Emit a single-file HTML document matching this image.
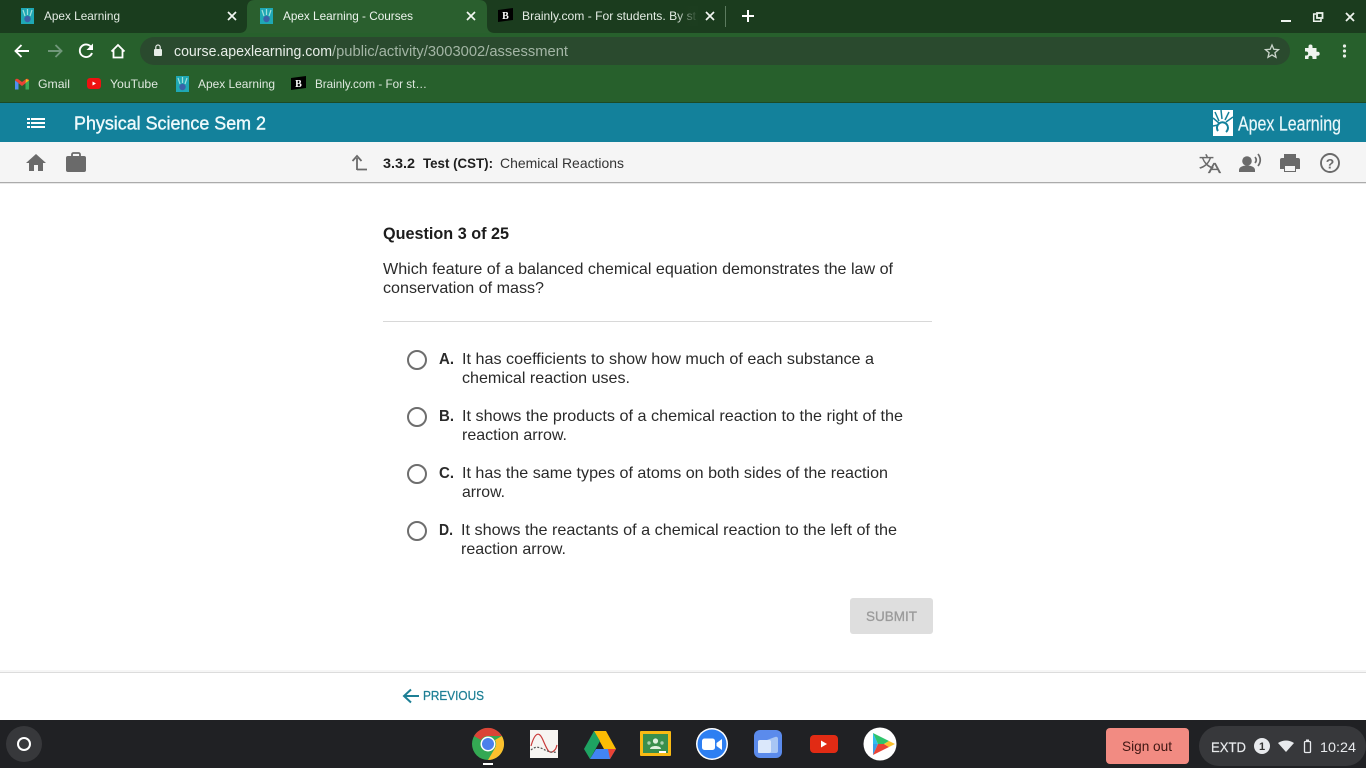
<!DOCTYPE html>
<html lang="en"><head><meta charset="utf-8"><title>Apex Learning - Courses</title>
<style>
html,body{margin:0;padding:0;width:1366px;height:768px;overflow:hidden;background:#fff}
svg{display:block}
text{font-family:"Liberation Sans",sans-serif}
</style></head><body>
<svg xmlns="http://www.w3.org/2000/svg" width="1366" height="768" viewBox="0 0 1366 768">
<defs>
<linearGradient id="fade" x1="0" x2="1"><stop offset="0" stop-color="#1c3d1f" stop-opacity="0"/><stop offset="1" stop-color="#1c3d1f"/></linearGradient>
<g id="apx"><rect width="13" height="16" fill="#1fa8b4"/><path d="M2 2l2 6M6.500 1v6M11 2L9 8" stroke="#9fe0dc" stroke-width="1.200" fill="none"/><circle cx="6.500" cy="11" r="3.200" fill="#3c62a8"/></g>
<g id="brn"><path d="M0 2L15 0V12L0 14Z" fill="#000"/><text x="7.500" y="11" font-size="10" font-weight="700" fill="#fff" text-anchor="middle" style="font-family:'Liberation Serif',serif">B</text></g>
</defs>

<!-- browser chrome -->
<rect width="1366" height="33" fill="#1b3c1e"/>
<rect y="0" width="247" height="33" fill="#1a3d1e"/>
<rect y="33" width="1366" height="70" fill="#27602c"/>
<rect y="102" width="1366" height="1" fill="#1d4a24"/>
<path d="M239 33q8 0 8-8V8q0-8 8-8h224q8 0 8 8v17q0 8 8 8Z" fill="#2a5f2e"/>

<use href="#apx" x="21" y="8"/>
<text x="44" y="20" font-size="12" fill="#e4ece4" textLength="76" lengthAdjust="spacingAndGlyphs">Apex Learning</text>
<path d="M228 12l8 8M236 12l-8 8" stroke="#f2f6f2" stroke-width="1.700"/>

<use href="#apx" x="260" y="8"/>
<text x="283" y="20" font-size="12" fill="#eef4ee" textLength="130" lengthAdjust="spacingAndGlyphs">Apex Learning - Courses</text>
<path d="M467 12l8 8M475 12l-8 8" stroke="#f2f6f2" stroke-width="1.700"/>

<use href="#brn" x="498" y="8"/>
<text x="522" y="20" font-size="12" fill="#e4ece4" textLength="174" lengthAdjust="spacingAndGlyphs">Brainly.com - For students. By st</text>
<rect x="676" y="6" width="22" height="20" fill="url(#fade)"/>
<path d="M706 12l8 8M714 12l-8 8" stroke="#f2f6f2" stroke-width="1.700"/>
<rect x="725" y="6" width="1" height="21" fill="#5c7b5f"/>
<path d="M748 10v12M742 16h12" stroke="#fff" stroke-width="2"/>

<path d="M1281 21h10" stroke="#eef4ee" stroke-width="2"/>
<path d="M1316 14h-2.300v7.300h7.300V19" fill="none" stroke="#eef4ee" stroke-width="1.500"/><rect x="1317" y="13" width="5.500" height="5" fill="none" stroke="#eef4ee" stroke-width="1.800"/>
<path d="M1346 13l8 8M1354 13l-8 8" stroke="#eef4ee" stroke-width="1.800"/>

<!-- toolbar -->
<path d="M29 51H16M21.500 45l-6 6 6 6" fill="none" stroke="#fff" stroke-width="1.900"/>
<path d="M61 51H48M55.500 45l6 6-6 6" fill="none" stroke="#70977a" stroke-width="1.900"/>
<path d="M91.500 47.500A6.300 6.300 0 1 0 92 53" fill="none" stroke="#fff" stroke-width="1.900"/><path d="M93 43.500v6.500h-6.500Z" fill="#fff"/>
<path d="M111.500 51.500L118 45l6.500 6.500M113.500 50v7.500h9V50" fill="none" stroke="#fff" stroke-width="1.800"/>
<rect x="140" y="37" width="1150" height="28" rx="14" fill="#2a4a2e"/>
<rect x="154" y="49" width="8" height="7" rx="1" fill="#e8eee8"/><path d="M155.800 49v-1.800a2.200 2.200 0 0 1 4.400 0V49" fill="none" stroke="#e8eee8" stroke-width="1.200"/>
<text x="174" y="56" font-size="14.500" fill="#e8eee8" textLength="158" lengthAdjust="spacingAndGlyphs">course.apexlearning.com</text>
<text x="332" y="56" font-size="14.500" fill="#a3b5a5" textLength="236" lengthAdjust="spacingAndGlyphs">/public/activity/3003002/assessment</text>
<path d="M1272 45l1.800 4.300 4.700.4-3.600 3 1.100 4.600-4-2.400-4 2.400 1.100-4.600-3.600-3 4.700-.4Z" fill="none" stroke="#c9d4ca" stroke-width="1.300"/>
<path d="M1305 48h3.500v-1.500a2 2 0 0 1 4 0V48h4v3.800h1.200a2 2 0 0 1 0 4h-1.200V59h-4v-1.200a2 2 0 0 0-4 0V59H1305v-3.500h1.200a2 2 0 0 0 0-4H1305Z" fill="#f0f4f0"/>
<circle cx="1344.500" cy="46" r="1.600" fill="#e8eee8"/><circle cx="1344.500" cy="51" r="1.600" fill="#e8eee8"/><circle cx="1344.500" cy="56" r="1.600" fill="#e8eee8"/>

<!-- bookmarks -->
<path d="M15 80.500a2 2 0 0 1 3-1.500l4 3 4-3a2 2 0 0 1 3 1.500L22 86Z" fill="#e94335"/>
<path d="M15 80.500V89.500h3.500V83Z" fill="#4f8ff0"/><path d="M29 80.500V89.500h-3.500V83Z" fill="#3cab58"/>
<path d="M26 79l3 1.500L25.500 83Z" fill="#f7bb1c"/>
<text x="38" y="88" font-size="12" fill="#dfe8df" textLength="32" lengthAdjust="spacingAndGlyphs">Gmail</text>
<rect x="87" y="78" width="14" height="11" rx="3" fill="#ee1111"/><path d="M92.500 81.500l3.500 2-3.500 2Z" fill="#fff"/>
<text x="110" y="88" font-size="12" fill="#dfe8df" textLength="48" lengthAdjust="spacingAndGlyphs">YouTube</text>
<use href="#apx" x="176" y="76"/>
<text x="198" y="88" font-size="12" fill="#dfe8df" textLength="77" lengthAdjust="spacingAndGlyphs">Apex Learning</text>
<use href="#brn" x="291" y="76"/>
<text x="315" y="88" font-size="12" fill="#dfe8df" textLength="112" lengthAdjust="spacingAndGlyphs">Brainly.com - For st…</text>

<!-- teal header -->
<rect y="103" width="1366" height="39" fill="#13819b"/>
<g fill="#fff"><rect x="27" y="118" width="3" height="2"/><rect x="27" y="122" width="3" height="2"/><rect x="27" y="126" width="3" height="2"/><rect x="31" y="118" width="14" height="2"/><rect x="31" y="122" width="14" height="2"/><rect x="31" y="126" width="14" height="2"/></g>
<text x="74" y="129.500" font-size="18" fill="#eefafc" stroke="#eefafc" stroke-width=".4" textLength="192" lengthAdjust="spacingAndGlyphs">Physical Science Sem 2</text>
<rect x="1213" y="110" width="20" height="26" fill="#fff"/>
<path d="M1215 112l4 9M1221 110l1 9M1229 112l-4 8M1233 117l-7 5M1213 118l6 5M1213 126l5-1" stroke="#13819b" stroke-width="1.500" fill="none"/>
<path d="M1218 131a5.500 5.500 0 1 1 8 1" fill="none" stroke="#13819b" stroke-width="2"/>
<text x="1238" y="130.500" font-size="20" fill="#e8f7fa" stroke="#e8f7fa" stroke-width=".2" textLength="103" lengthAdjust="spacingAndGlyphs">Apex Learning</text>

<!-- sub bar -->
<rect y="142" width="1366" height="40" fill="#f5f5f5"/>
<rect y="182" width="1366" height="1" fill="#ababab"/>
<rect y="183" width="1366" height="1" fill="#e8e8e8"/>
<path d="M36 154l-10 9h3v8h5v-6h4v6h5v-8h3Z" fill="#6a6a6a"/>
<path d="M72 156v-1.500a1.500 1.500 0 0 1 1.500-1.500h5a1.500 1.500 0 0 1 1.500 1.500V156" fill="none" stroke="#6a6a6a" stroke-width="1.800"/><rect x="66" y="156" width="20" height="16" rx="2" fill="#6a6a6a"/>
<path d="M357 170v-12M352.500 161l4.500-5 4.500 5M357 169.500h10" fill="none" stroke="#6a6a6a" stroke-width="1.800"/>
<text x="383" y="168" font-size="14" font-weight="700" fill="#1f1f1f" textLength="32" lengthAdjust="spacingAndGlyphs">3.3.2</text>
<text x="423" y="168" font-size="14" font-weight="700" fill="#1f1f1f" textLength="70" lengthAdjust="spacingAndGlyphs">Test (CST):</text>
<text x="500" y="168" font-size="14" fill="#333" textLength="124" lengthAdjust="spacingAndGlyphs">Chemical Reactions</text>

<text x="1199" y="167" font-size="15" fill="#6a6a6a" stroke="#6a6a6a" stroke-width=".3" style="font-family:'Noto Sans CJK SC',sans-serif">文</text>
<text x="1208" y="173" font-size="15" fill="#6a6a6a" stroke="#6a6a6a" stroke-width=".3" textLength="13" lengthAdjust="spacingAndGlyphs">A</text>
<circle cx="1247" cy="161" r="4.800" fill="#6a6a6a"/><path d="M1239 172v-2c0-3 4-4.500 8-4.500s8 1.500 8 4.500v2Z" fill="#6a6a6a"/>
<path d="M1255 157q2.500 3 0 6M1258 154q4.500 6 0 12" fill="none" stroke="#6a6a6a" stroke-width="1.700"/>
<path d="M1284 154h12v4h-12Z" fill="#6a6a6a"/><path d="M1280 160a2 2 0 0 1 2-2h16a2 2 0 0 1 2 2v9h-4v3h-12v-3h-4Z" fill="#6a6a6a"/><rect x="1285" y="166" width="10" height="5" fill="#f5f5f5"/>
<circle cx="1330" cy="163" r="9" fill="none" stroke="#6a6a6a" stroke-width="1.900"/>
<text x="1330" y="168.500" font-size="14" font-weight="700" fill="#6a6a6a" text-anchor="middle">?</text>

<!-- question -->
<text x="383" y="239" font-size="17" font-weight="700" fill="#1c1c1c" textLength="126" lengthAdjust="spacingAndGlyphs">Question 3 of 25</text>
<text x="383" y="274" font-size="16" fill="#2a2a2a" textLength="510" lengthAdjust="spacingAndGlyphs">Which feature of a balanced chemical equation demonstrates the law of</text>
<text x="383" y="293" font-size="16" fill="#2a2a2a" textLength="161" lengthAdjust="spacingAndGlyphs">conservation of mass?</text>
<rect x="383" y="321" width="549" height="1" fill="#d8d8d8"/>

<g fill="none" stroke="#6e6e6e" stroke-width="2"><circle cx="417" cy="360" r="9"/><circle cx="417" cy="417" r="9"/><circle cx="417" cy="474" r="9"/><circle cx="417" cy="531" r="9"/></g>
<g font-size="16" fill="#2a2a2a">
<text x="439" y="364" font-weight="700" textLength="15" lengthAdjust="spacingAndGlyphs">A.</text>
<text x="462" y="364" textLength="412" lengthAdjust="spacingAndGlyphs">It has coefficients to show how much of each substance a</text>
<text x="462" y="383" textLength="168" lengthAdjust="spacingAndGlyphs">chemical reaction uses.</text>
<text x="439" y="421" font-weight="700" textLength="15" lengthAdjust="spacingAndGlyphs">B.</text>
<text x="462" y="421" textLength="441" lengthAdjust="spacingAndGlyphs">It shows the products of a chemical reaction to the right of the</text>
<text x="462" y="440" textLength="105" lengthAdjust="spacingAndGlyphs">reaction arrow.</text>
<text x="439" y="478" font-weight="700" textLength="15" lengthAdjust="spacingAndGlyphs">C.</text>
<text x="462" y="478" textLength="426" lengthAdjust="spacingAndGlyphs">It has the same types of atoms on both sides of the reaction</text>
<text x="462" y="497" textLength="43" lengthAdjust="spacingAndGlyphs">arrow.</text>
<text x="439" y="535" font-weight="700" textLength="14" lengthAdjust="spacingAndGlyphs">D.</text>
<text x="461" y="535" textLength="436" lengthAdjust="spacingAndGlyphs">It shows the reactants of a chemical reaction to the left of the</text>
<text x="461" y="554" textLength="105" lengthAdjust="spacingAndGlyphs">reaction arrow.</text>
</g>

<rect x="850" y="598" width="83" height="36" rx="3" fill="#dedede"/>
<text x="866" y="621" font-size="14" fill="#9a9a9a" stroke="#9a9a9a" stroke-width=".3" textLength="51" lengthAdjust="spacingAndGlyphs">SUBMIT</text>

<!-- footer -->
<rect y="672" width="1366" height="1" fill="#dcdcdc"/>
<rect y="670" width="1366" height="2" fill="#f6f6f6"/>
<path d="M419 696H405M411 689.500l-7 6.500 7 6.500" fill="none" stroke="#1d7f95" stroke-width="2"/>
<text x="423" y="700" font-size="12.500" fill="#1d7f95" stroke="#1d7f95" stroke-width=".25" textLength="61" lengthAdjust="spacingAndGlyphs">PREVIOUS</text>

<!-- shelf -->
<rect y="720" width="1366" height="48" fill="#202124"/>
<circle cx="24" cy="744" r="18" fill="#37383b"/>
<circle cx="24" cy="744" r="6" fill="none" stroke="#fff" stroke-width="2"/>

<!-- chrome -->
<circle cx="488" cy="744" r="16" fill="#34a853"/>
<path d="M474.100 736A16 16 0 0 1 501.900 736H488a8 8 0 0 0-7 4Z" fill="#db4437"/>
<path d="M501.900 736A16 16 0 0 1 488 760l7-12a8 8 0 0 0 0-8Z" fill="#fbc02d"/>
<circle cx="488" cy="744" r="7.500" fill="#fff"/><circle cx="488" cy="744" r="6" fill="#4a80ec"/>
<rect x="483" y="763" width="10" height="2" fill="#fff"/>
<!-- graph -->
<rect x="530" y="730" width="28" height="28" fill="#f7f5f2"/>
<path d="M531 746c4-14 8-14 11-8s6 16 10 14 4-4 5-7" fill="none" stroke="#c93a3a" stroke-width="1.200"/>
<path d="M531 750c4-4 8-3 12-1s8 4 14 3" fill="none" stroke="#555" stroke-width="1.200" stroke-dasharray="2 1.500"/>
<!-- drive -->
<path d="M594 731h12l10 18h-12Z" fill="#fbbc04"/><path d="M594 731l-10 18 6 10 10-18Z" fill="#1ea362"/><path d="M590 759h20l6-10h-20Z" fill="#4285f4"/><path d="M610 759l6-10h-8Z" fill="#ea4335"/>
<!-- classroom -->
<rect x="640" y="731" width="31" height="25" rx="1" fill="#f9ba14"/><rect x="643" y="734" width="25" height="19" fill="#3a8f4d"/>
<circle cx="655.500" cy="741" r="2.600" fill="#dff0df"/><path d="M650 749c0-4 11-4 11 0Z" fill="#dff0df"/><circle cx="649" cy="743" r="1.700" fill="#a8d0ae"/><circle cx="662" cy="743" r="1.700" fill="#a8d0ae"/>
<rect x="659" y="751" width="7" height="2" fill="#fff"/>
<!-- zoom -->
<circle cx="712" cy="744" r="16" fill="#fff"/><circle cx="712" cy="744" r="14.500" fill="#2d7ff2"/>
<rect x="702" y="738.500" width="13" height="11.500" rx="2.500" fill="#fff"/><path d="M716.500 743l5.500-4v11l-5.500-4Z" fill="#fff"/>
<!-- files -->
<rect x="754" y="730" width="28" height="28" rx="6" fill="#5b8bec"/>
<path d="M758 741h7l2-1 8-3a2 2 0 0 1 3 2v12a2 2 0 0 1-2 2h-18Z" fill="#a8c6f4"/><rect x="758" y="740" width="13" height="13" rx="2" fill="#dbe8fb"/>
<!-- youtube -->
<rect x="810" y="735" width="28" height="18" rx="4" fill="#e12b14"/><path d="M821 740.500l6 3.500-6 3.500Z" fill="#fff"/>
<!-- play -->
<circle cx="880" cy="744" r="16.500" fill="#fff"/>
<path d="M873 733v11h5Z" fill="#30bdf0"/><path d="M873 733l16 8-5 3h-6Z" fill="#2fc46c"/><path d="M873 755v-11h5Z" fill="#3a9ee8"/><path d="M873 755l16-8-5-3h-6Z" fill="#ea4335"/><path d="M889 741l6 3-6 3-5-3Z" fill="#fbc02d"/>

<!-- status -->
<rect x="1106" y="728" width="83" height="36" rx="4" fill="#f28b82"/>
<text x="1122" y="751" font-size="14" fill="#3f1612" textLength="50" lengthAdjust="spacingAndGlyphs">Sign out</text>
<rect x="1199" y="726" width="167" height="40" rx="20" fill="#37383b"/>
<text x="1211" y="752" font-size="14" fill="#e8eaed" stroke="#e8eaed" stroke-width=".2" textLength="35" lengthAdjust="spacingAndGlyphs">EXTD</text>
<circle cx="1262" cy="746" r="8" fill="#e8eaed"/>
<text x="1262" y="750" font-size="11" font-weight="700" fill="#333" text-anchor="middle">1</text>
<path d="M1278 743q8-5 16 0l-8 9Z" fill="#e8eaed"/>
<rect x="1304.500" y="741.500" width="6" height="11" rx="1" fill="none" stroke="#e8eaed" stroke-width="1.300"/><rect x="1306" y="739.500" width="3" height="2" fill="#e8eaed"/>
<text x="1320" y="752" font-size="14" fill="#e8eaed" textLength="36" lengthAdjust="spacingAndGlyphs">10:24</text>
</svg>
</body></html>
